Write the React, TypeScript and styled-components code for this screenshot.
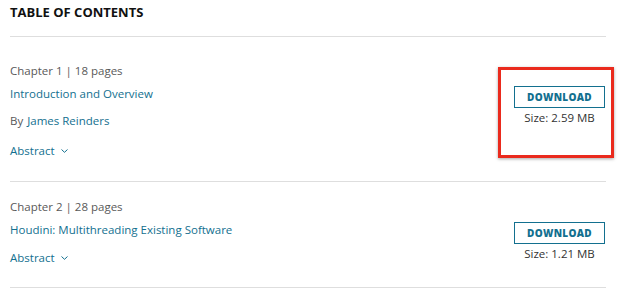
import React from 'react';
import styled, { createGlobalStyle } from 'styled-components';

const GlobalStyle = createGlobalStyle`
  body {
    margin: 0;
    background: #fff;
    font-family: 'Open Sans', 'Liberation Sans', sans-serif;
  }
`;

type Chapter = {
  number: number;
  pages: number;
  title: string;
  author?: string;
  size: string;
  highlighted?: boolean;
};

const chapters: Chapter[] = [
  {
    number: 1,
    pages: 18,
    title: 'Introduction and Overview',
    author: 'James Reinders',
    size: '2.59 MB',
    highlighted: true,
  },
  {
    number: 2,
    pages: 28,
    title: 'Houdini: Multithreading Existing Software',
    size: '1.21 MB',
  },
];

export default function App() {
  return (
    <>
      <GlobalStyle />
      <TocStyles>
        <Heading>Table of Contents</Heading>
        <List>
          {chapters.map(chapter => (
            <Item key={chapter.number}>
              <Meta>
                Chapter {chapter.number} | {chapter.pages} pages
              </Meta>
              <Row>
                <div>
                  <TitleLink href="#">{chapter.title}</TitleLink>
                  {chapter.author ? (
                    <Authors>
                      By <a href="#">{chapter.author}</a>
                    </Authors>
                  ) : null}
                  <AbstractToggle type="button">
                    Abstract
                    <svg viewBox="0 0 7 4" width="7" height="4">
                      <polyline
                        points="0.5,0.5 3.5,3.3 6.5,0.5"
                        fill="none"
                        stroke="currentColor"
                        strokeWidth="1"
                      />
                    </svg>
                  </AbstractToggle>
                </div>
                <DownloadBlock>
                  {chapter.highlighted ? <Highlight /> : null}
                  <DownloadButton type="button">Download</DownloadButton>
                  <SizeLabel>Size: {chapter.size}</SizeLabel>
                </DownloadBlock>
              </Row>
            </Item>
          ))}
        </List>
      </TocStyles>
    </>
  );
}

const teal = '#13708f';

const TocStyles = styled.div`
  width: 596px;
  padding: 2px 0 0 10px;
`;

const Heading = styled.h2`
  margin: 0;
  padding: 0 0 14px;
  font-size: 13px;
  line-height: 20px;
  font-weight: 700;
  text-transform: uppercase;
  color: #111;
  border-bottom: 1px solid #dedede;
`;

const List = styled.div`
  padding: 9px 0 0;
`;

const Item = styled.div`
  padding: 16px 0 21px;
  border-bottom: 1px solid #dedede;

  & + & {
    padding: 16px 0 20px;
  }
`;

const Meta = styled.div`
  margin: 0 0 5px;
  font-size: 11.5px;
  line-height: 18px;
  color: #595959;
`;

const Row = styled.div`
  display: flex;
  justify-content: space-between;
  align-items: flex-start;
`;

const TitleLink = styled.a`
  display: block;
  font-size: 11.5px;
  line-height: 18px;
  color: ${teal};
  text-decoration: none;
`;

const Authors = styled.div`
  margin: 9px 0 0;
  font-size: 11.5px;
  line-height: 18px;
  color: #595959;

  a {
    margin: 0 0 0 1px;
    color: ${teal};
    text-decoration: none;
  }
`;

const AbstractToggle = styled.button`
  margin: 10px 0 0;
  padding: 0;
  display: flex;
  align-items: center;
  gap: 6px;
  font-family: inherit;
  font-size: 11.5px;
  line-height: 18px;
  color: ${teal};
  background: transparent;
  border: 0;

  ${Authors} + & {
    margin: 12px 0 0;
  }
`;

const DownloadBlock = styled.div`
  position: relative;
  margin: 1px 1px 0 0;
  display: flex;
  flex-direction: column;
  align-items: center;
`;

const DownloadButton = styled.button`
  width: 91px;
  height: 22px;
  padding: 0;
  font-family: inherit;
  font-size: 10px;
  font-weight: 800;
  letter-spacing: 0.3px;
  text-transform: uppercase;
  color: ${teal};
  background: #fff;
  border: 1px solid ${teal};
`;

const SizeLabel = styled.div`
  margin: 1px 0 0;
  font-size: 11.5px;
  line-height: 18px;
  color: #333;
`;

const Highlight = styled.div`
  position: absolute;
  top: -19px;
  left: -16px;
  width: 116px;
  height: 91px;
  box-sizing: border-box;
  border: 3px solid #ea2a1d;
  box-shadow: 0 1px 3px rgba(0, 0, 0, 0.35);
  pointer-events: none;
`;
